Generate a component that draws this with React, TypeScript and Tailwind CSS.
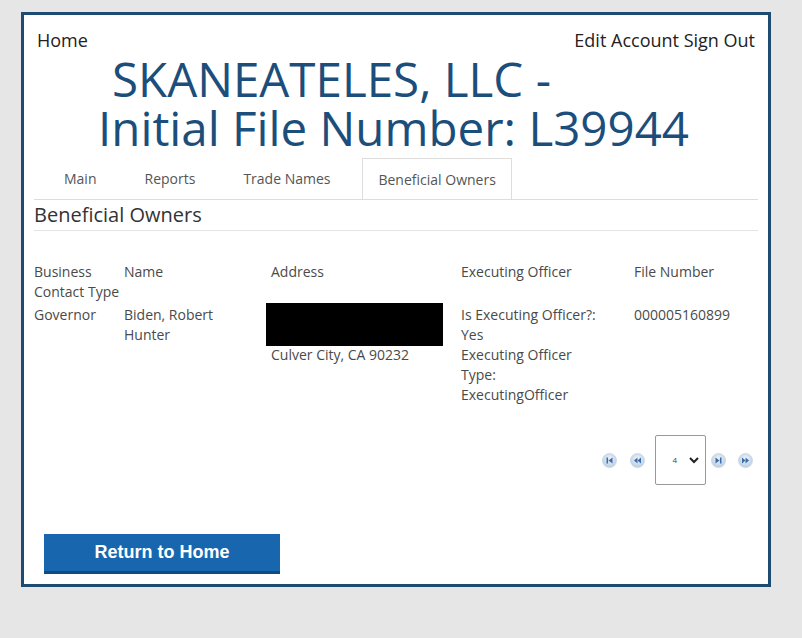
import React from "react";

const tabs = ["Main", "Reports", "Trade Names", "Beneficial Owners"];

function PagerIcon({ kind }: { kind: "first" | "prev" | "next" | "last" }) {
  const glyph = {
    first: (
      <>
        <rect x="4.5" y="4.5" width="1.6" height="6" />
        <path d="M10.5 4.5 L6.5 7.5 L10.5 10.5 Z" />
      </>
    ),
    prev: (
      <>
        <path d="M7.5 4.5 L4 7.5 L7.5 10.5 Z" />
        <path d="M11 4.5 L7.5 7.5 L11 10.5 Z" />
      </>
    ),
    next: (
      <>
        <path d="M4.5 4.5 L8.5 7.5 L4.5 10.5 Z" />
        <rect x="8.9" y="4.5" width="1.6" height="6" />
      </>
    ),
    last: (
      <>
        <path d="M4 4.5 L7.5 7.5 L4 10.5 Z" />
        <path d="M7.5 4.5 L11 7.5 L7.5 10.5 Z" />
      </>
    ),
  }[kind];
  return (
    <svg width="15" height="15" viewBox="0 0 15 15">
      <defs>
        <radialGradient id={`g-${kind}`} cx="50%" cy="40%" r="60%">
          <stop offset="0%" stopColor="#f4f8fc" />
          <stop offset="100%" stopColor="#b9cbe0" />
        </radialGradient>
      </defs>
      <circle cx="7.5" cy="7.5" r="7" fill={`url(#g-${kind})`} stroke="#c8d4e2" strokeWidth="0.8" />
      <g fill="#3a6da8">{glyph}</g>
    </svg>
  );
}

export default function App() {
  return (
    <div
      className="w-[802px] h-[638px] bg-[#e6e6e6] pt-[12px] pl-[21px] overflow-hidden"
      style={{ fontFamily: '"Open Sans", "Liberation Sans", sans-serif' }}
    >
      <div className="w-[750px] h-[575px] border-[3px] border-[#1e4b72] bg-white flex flex-col">
        {/* top links */}
        <div className="flex justify-between px-[13px] pt-[13px] text-[18px] leading-[24px] text-[#222]">
          <span>Home</span>
          <span>Edit Account Sign Out</span>
        </div>

        {/* title */}
        <h1 className="text-[47.5px] leading-[49px] text-[#1c4e7c] font-normal mt-[2px]">
          <span className="block pl-[88px]">SKANEATELES, LLC -</span>
          <span className="block pl-[74px]">Initial File Number: L39944</span>
        </h1>

        {/* tabs */}
        <div className="mx-[10px] mt-[6px] border-b border-[#dddddd] flex pl-[6px] text-[14px] text-[#555]">
          {tabs.map((t, i) =>
            i === tabs.length - 1 ? (
              <div
                key={t}
                className="mx-2 px-[15px] h-[41px] flex items-center border border-b-0 border-[#dddddd] bg-white -mb-px"
              >
                {t}
              </div>
            ) : (
              <div key={t} className="mx-2 px-4 h-[41px] flex items-center">
                {t}
              </div>
            )
          )}
        </div>

        {/* section heading */}
        <div className="mx-[10px] border-b border-[#e5e5e5] text-[20px] leading-[30px] text-[#333]">
          Beneficial Owners
        </div>

        {/* table */}
        <div className="mx-[10px] mt-[31px] text-[14px] leading-[20px] text-[#4a4a4a]">
          <div className="grid grid-cols-[90px_147px_190px_173px_1fr]">
            <div>
              Business
              <br />
              Contact Type
            </div>
            <div>Name</div>
            <div>Address</div>
            <div>Executing Officer</div>
            <div>File Number</div>
          </div>
          <div className="grid grid-cols-[90px_147px_190px_173px_1fr] mt-[3px]">
            <div>Governor</div>
            <div>
              Biden, Robert
              <br />
              Hunter
            </div>
            <div>
              <div className="w-[177px] h-[43px] bg-black -ml-[5px] -mt-[2px] -mb-[1px]" />
              Culver City, CA 90232
            </div>
            <div>
              Is Executing Officer?:
              <br />
              Yes
              <br />
              Executing Officer
              <br />
              Type:
              <br />
              ExecutingOfficer
            </div>
            <div>000005160899</div>
          </div>
        </div>

        {/* pager */}
        <div className="flex justify-end items-center pr-[15px] mt-[30px]">
          <PagerIcon kind="first" />
          <div className="w-[13px]" />
          <PagerIcon kind="prev" />
          <div className="w-[10px]" />
          <div className="w-[51px] h-[50px] border border-[#999] rounded-[2px] flex items-center justify-end pr-[6px] gap-[12px]">
            <span className="text-[8px] text-[#444] leading-none">4</span>
            <svg width="10" height="7" viewBox="0 0 10 7">
              <path d="M1 1 L5 5 L9 1" fill="none" stroke="#222" strokeWidth="2" />
            </svg>
          </div>
          <div className="w-[5px]" />
          <PagerIcon kind="next" />
          <div className="w-[12px]" />
          <PagerIcon kind="last" />
        </div>

        {/* button */}
        <div className="pl-[20px] mt-[49px]">
          <button
            className="w-[236px] h-[40px] bg-[#1866ae] border-b-[3px] border-[#0f4c86] text-white text-[18px] font-bold"
            style={{ fontFamily: '"Liberation Sans", Arial, sans-serif' }}
          >
            Return to Home
          </button>
        </div>
      </div>
    </div>
  );
}
